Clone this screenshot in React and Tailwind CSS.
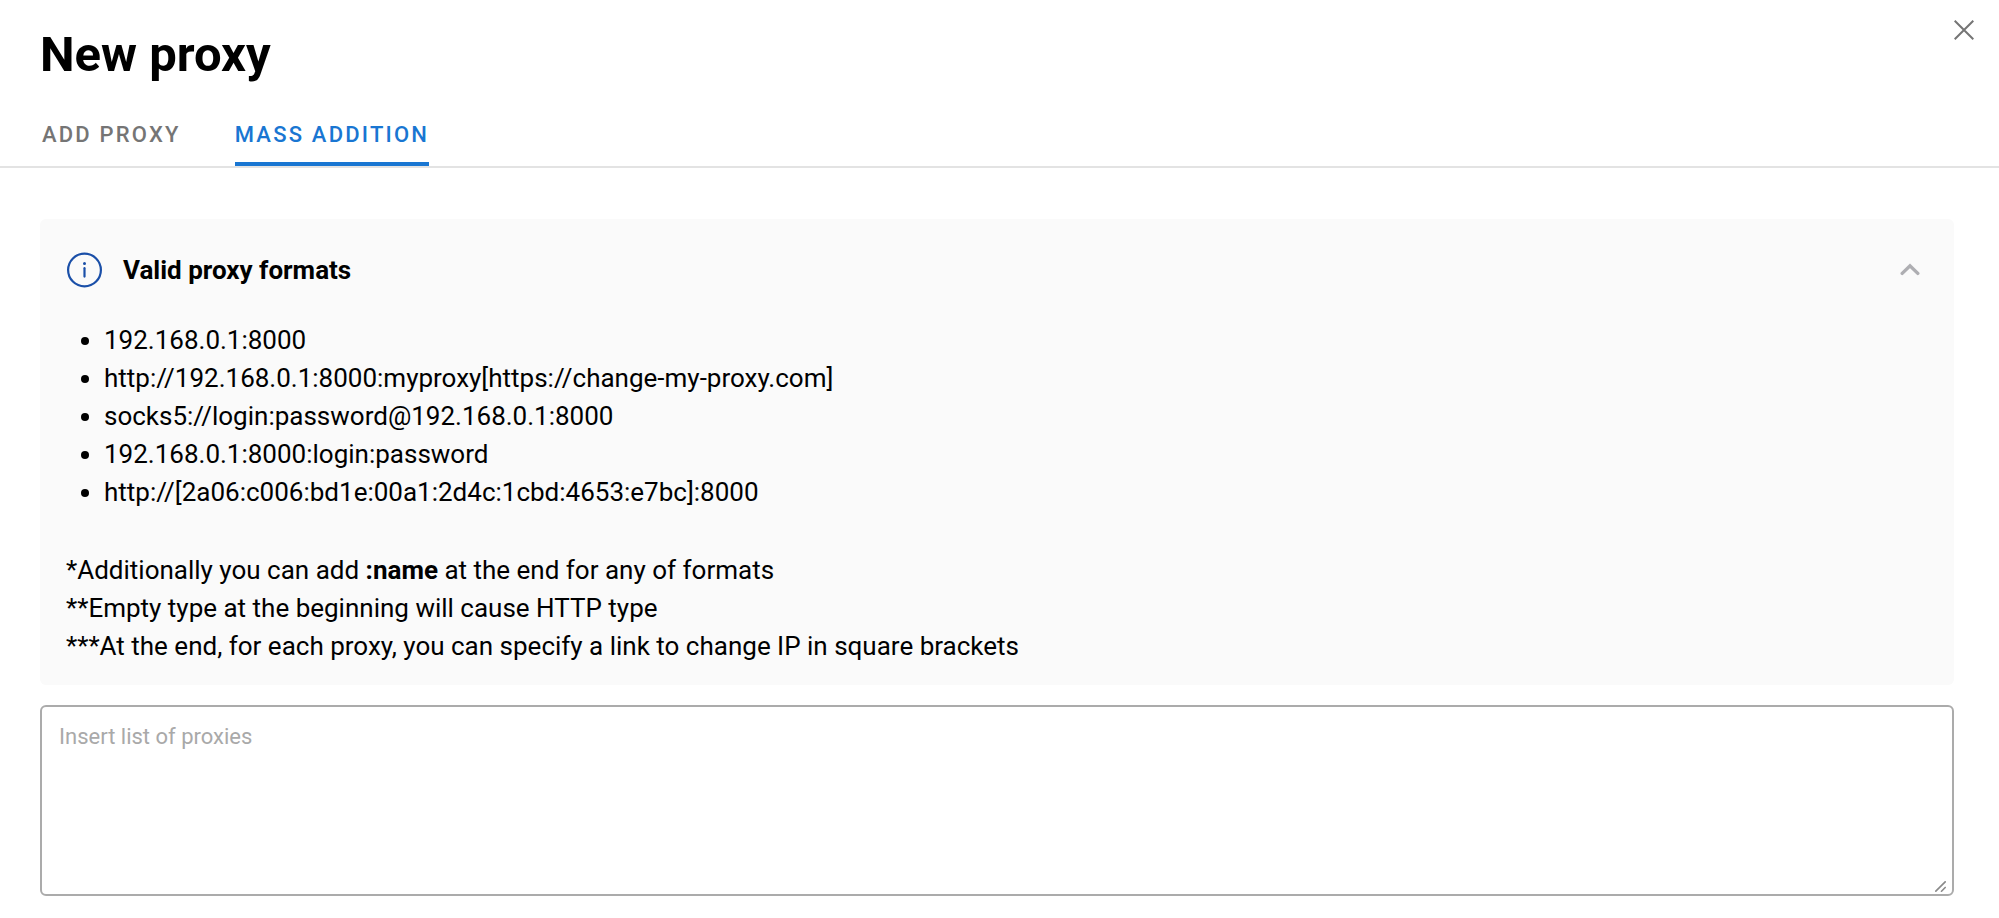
import { useState } from "react";

const tabs = [
  { id: "add", label: "ADD PROXY" },
  { id: "mass", label: "MASS ADDITION" },
];

const formats = [
  "192.168.0.1:8000",
  "http://192.168.0.1:8000:myproxy[https://change-my-proxy.com]",
  "socks5://login:password@192.168.0.1:8000",
  "192.168.0.1:8000:login:password",
  "http://[2a06:c006:bd1e:00a1:2d4c:1cbd:4653:e7bc]:8000",
];

const CloseIcon = () => (
  <svg width="20" height="20" viewBox="0 0 20 20" fill="none" stroke="#757575" strokeWidth="2" aria-hidden="true">
    <path d="M0.7 0.7 19.3 19.3M19.3 0.7 0.7 19.3" />
  </svg>
);

const InfoIcon = () => (
  <svg width="36" height="36" viewBox="0 0 36 36" fill="none" stroke="#1a4fa8" strokeWidth="2.2" aria-hidden="true">
    <circle cx="18.5" cy="18" r="16.4" />
    <path d="M18.5 16.2v8.4" strokeLinecap="round" />
    <circle cx="18.5" cy="11.6" r="1.5" fill="#1a4fa8" stroke="none" />
  </svg>
);

const ChevronIcon = ({ open }) => (
  <svg
    width="20"
    height="14"
    viewBox="0 0 20 14"
    fill="none"
    stroke="#aeaeb2"
    strokeWidth="3.4"
    strokeLinecap="round"
    className={open ? "" : "rotate-180"}
    aria-hidden="true"
  >
    <path d="M2.2 10.4 10 2.8 17.8 10.4" />
  </svg>
);

const ResizeGrip = () => (
  <svg
    className="absolute right-2 bottom-1 pointer-events-none"
    width="11"
    height="11"
    viewBox="0 0 11 11"
    fill="none"
    stroke="#8a8a8a"
    strokeWidth="1.6"
    aria-hidden="true"
  >
    <path d="M0.3 10.7 10.7 0.3M6 10.7 10.7 6" />
  </svg>
);

const App = () => {
  const [activeTab, setActiveTab] = useState("mass");
  const [open, setOpen] = useState(true);
  const [proxies, setProxies] = useState("");

  return (
    <div className="bg-white text-black font-[Roboto,sans-serif]">
      {/* Header */}
      <header className="flex items-start justify-between pl-10 pr-[25px] pt-5">
        <h1 className="pt-1 text-[49px] leading-[62px] font-bold">New proxy</h1>
        <button type="button" aria-label="Close" className="cursor-pointer">
          <CloseIcon />
        </button>
      </header>

      {/* Tabs */}
      <div role="tablist" className="flex gap-[54px] px-[42px] pt-6 border-b-2 border-[#e3e3e3]">
        {tabs.map((tab) => (
          <button
            key={tab.id}
            type="button"
            role="tab"
            aria-selected={activeTab === tab.id}
            onClick={() => setActiveTab(tab.id)}
            className={`h-14 pb-1 border-b-4 text-[22px] font-medium tracking-widest cursor-pointer ${
              activeTab === tab.id ? "border-[#1976d2] text-[#1976d2]" : "border-transparent text-[#757575]"
            }`}
          >
            {tab.label}
          </button>
        ))}
      </div>

      <main className="pl-10 pr-[45px] pt-[51px] pb-6">
        {/* Valid formats */}
        <section className="rounded-md bg-[#fafafa] px-[26px] pt-8 pb-5 text-[26px] leading-[38px]">
          <button
            type="button"
            aria-expanded={open}
            onClick={() => setOpen(!open)}
            className="flex w-full items-center justify-between pr-2 cursor-pointer"
          >
            <span className="flex items-center gap-[21px] font-bold">
              <InfoIcon />
              Valid proxy formats
            </span>
            <ChevronIcon open={open} />
          </button>

          {open && (
            <>
              <ul className="mt-8 list-disc pl-[38px]">
                {formats.map((format) => (
                  <li key={format}>{format}</li>
                ))}
              </ul>
              <div className="mt-10">
                <p>
                  *Additionally you can add <b>:name</b> at the end for any of formats
                </p>
                <p>**Empty type at the beginning will cause HTTP type</p>
                <p>***At the end, for each proxy, you can specify a link to change IP in square brackets</p>
              </div>
            </>
          )}
        </section>

        {/* Proxy list */}
        <div className="relative mt-5">
          <textarea
            aria-label="Insert list of proxies"
            placeholder="Insert list of proxies"
            value={proxies}
            onChange={(e) => setProxies(e.target.value)}
            className="block h-[191px] w-full resize-none rounded-md border-2 border-[#ababab] px-[17px] py-3 text-[22px] leading-9 outline-none placeholder:text-[#a9a9a9]"
          />
          <ResizeGrip />
        </div>
      </main>
    </div>
  );
};

export default App;
